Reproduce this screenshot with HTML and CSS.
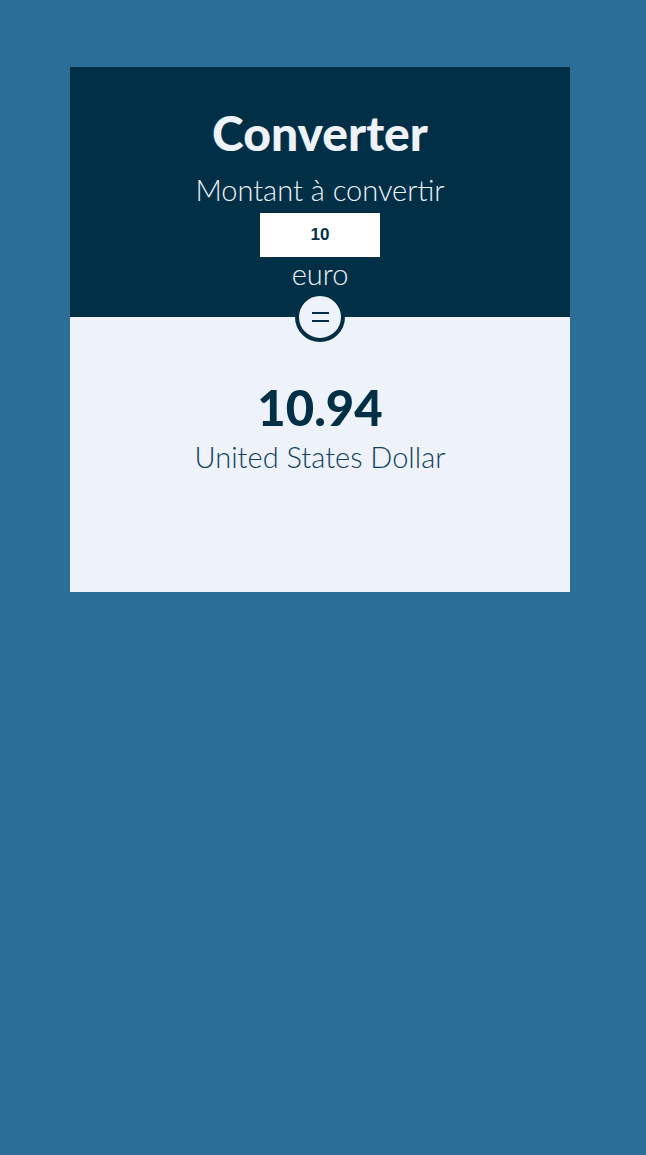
FILE: index.html
```html
<!DOCTYPE html>
<html lang="fr">
<head>
<meta charset="utf-8">
<title>Converter</title>
<link rel="stylesheet" href="styles.css">
</head>
<body>
<main class="card">
  <section class="top">
    <h1 class="title">Converter</h1>
    <label class="label" for="amount">Montant à convertir</label>
    <input class="amount" id="amount" type="text" value="10">
    <div class="currency">euro</div>
    <div class="equals" aria-label="="><span></span></div>
  </section>
  <section class="bottom">
    <div class="result">10.94</div>
    <div class="result-currency">United States Dollar</div>
  </section>
</main>
</body>
</html>
```
FILE: styles.css
```css
html, body {
  margin: 0;
  padding: 0;
}
body {
  background: #2a6f97;
  min-height: 1155px;
  font-family: "Lato", "Open Sans", sans-serif;
}
.card {
  width: 500px;
  margin: 67px 0 0 70px;
}
.top {
  position: relative;
  background: #012f46;
  color: #edf2fb;
  height: 250px;
  display: flex;
  flex-direction: column;
  align-items: center;
  box-sizing: border-box;
  padding-top: 38px;
}
.top > * {
  flex-shrink: 0;
}
.title {
  margin: 0;
  font-size: 48px;
  font-weight: 900;
  line-height: 56px;
}
.label {
  font-size: 29px;
  font-weight: 300;
  line-height: 34px;
  margin-top: 12px;
}
.amount {
  width: 120px;
  height: 44px;
  box-sizing: border-box;
  border: none;
  outline: none;
  background: #fff;
  text-align: center;
  font-family: "Liberation Sans", Arial, sans-serif;
  font-weight: 700;
  font-size: 17px;
  color: #012f46;
  margin-top: 6px;
  padding: 0;
}
.currency {
  font-size: 29px;
  font-weight: 300;
  line-height: 34px;
  margin-top: 0;
}
.equals {
  position: absolute;
  left: 50%;
  bottom: 0;
  transform: translate(-50%, 50%);
  width: 50px;
  height: 50px;
  box-sizing: border-box;
  border: 4px solid #012f46;
  border-radius: 50%;
  background: #edf2fb;
  display: flex;
  align-items: center;
  justify-content: center;
}
.equals span {
  display: block;
  width: 17px;
  height: 10px;
  box-sizing: border-box;
  border-top: 2px solid #012f46;
  border-bottom: 2px solid #012f46;
}
.bottom {
  background: #edf2fb;
  height: 275px;
  display: flex;
  flex-direction: column;
  align-items: center;
  padding-top: 61px;
  box-sizing: border-box;
  color: #012f46;
}
.result {
  font-size: 49px;
  font-weight: 900;
  line-height: 58px;
}
.result-currency {
  font-size: 29px;
  font-weight: 300;
  line-height: 34px;
  color: #113f60;
  margin-top: 4px;
}
```
